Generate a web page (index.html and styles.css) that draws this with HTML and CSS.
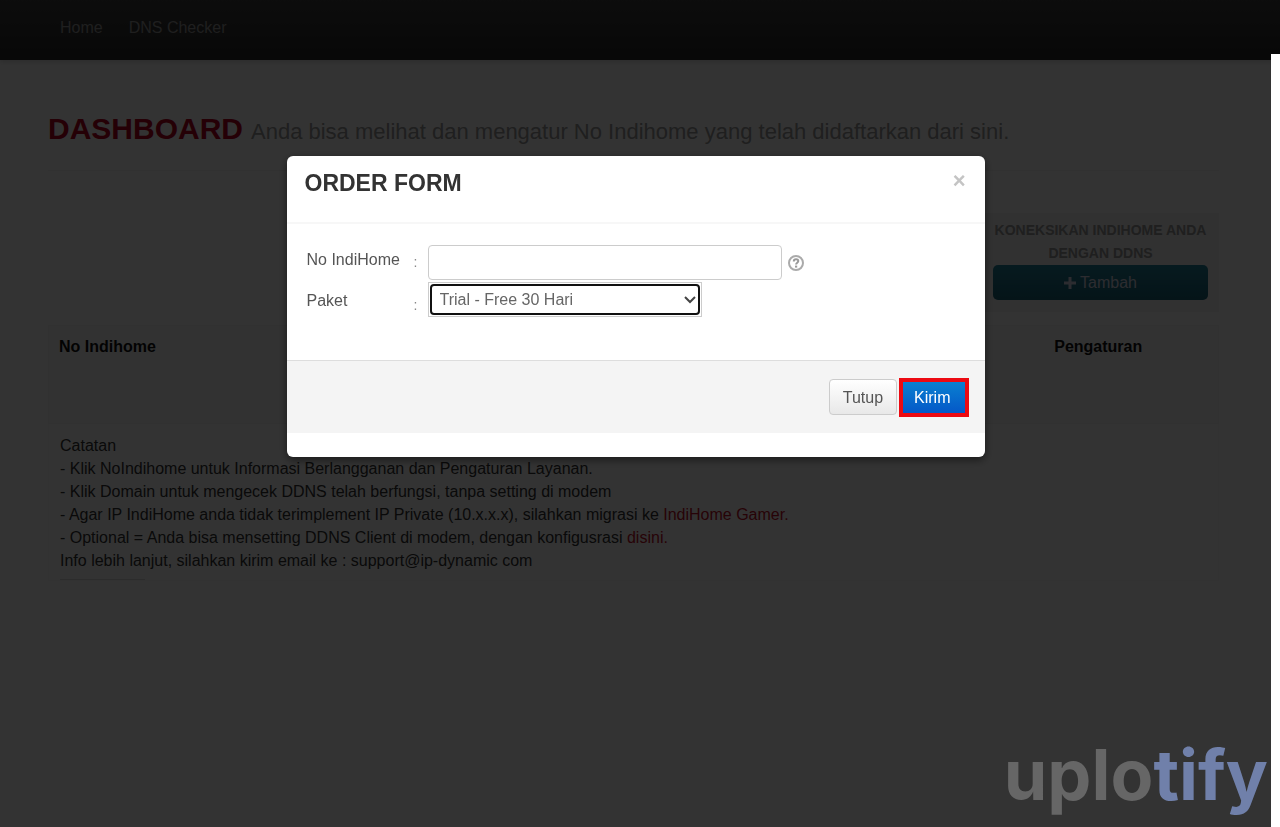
FILE: index.html
```
<!DOCTYPE html>
<html lang="id">
<head>
    <meta charset="UTF-8">
    <meta name="viewport" content="width=device-width, initial-scale=1.0">
    <title>Dashboard</title>
    <link rel="stylesheet" href="styles.css">
</head>
<body>
    <nav class="navbar">
        <a href="#">Home</a>
        <a href="#">DNS Checker</a>
    </nav>

    <main class="container">
        <header class="page-header">
            <h1>DASHBOARD</h1>
            <p>Anda bisa melihat dan mengatur No Indihome yang telah didaftarkan dari sini.</p>
        </header>

        <section class="well">
            <p>KONEKSIKAN INDIHOME ANDA DENGAN DDNS</p>
            <button type="button" class="btn-info">
                <svg width="12" height="12" viewBox="0 0 12 12" aria-hidden="true"><path d="M6 0v12M0 6h12" stroke="currentColor" stroke-width="3"/></svg>
                Tambah
            </button>
        </section>

        <table class="service-table">
            <thead>
                <tr>
                    <th>No Indihome</th>
                    <th class="settings">Pengaturan</th>
                </tr>
            </thead>
            <tbody>
                <tr>
                    <td></td>
                    <td></td>
                </tr>
            </tbody>
        </table>

        <section class="notes">
            <p>Catatan</p>
            <p>- Klik NoIndihome untuk Informasi Berlangganan dan Pengaturan Layanan.</p>
            <p>- Klik Domain untuk mengecek DDNS telah berfungsi, tanpa setting di modem</p>
            <p>- Agar IP IndiHome anda tidak terimplement IP Private (10.x.x.x), silahkan migrasi ke <a href="#">IndiHome Gamer.</a></p>
            <p>- Optional = Anda bisa mensetting DDNS Client di modem, dengan konfigusrasi <a href="#">disini.</a></p>
            <p>Info lebih lanjut, silahkan kirim email ke : support@ip-dynamic com</p>
            <hr>
        </section>
    </main>

    <div class="backdrop">
        <form class="modal" role="dialog" aria-labelledby="orderTitle">
            <div class="modal-header">
                <h2 id="orderTitle">ORDER FORM</h2>
                <button type="button" class="close" aria-label="Tutup">×</button>
            </div>
            <div class="modal-body">
                <label for="number">No IndiHome</label>
                <span class="colon">:</span>
                <div class="field">
                    <input type="text" id="number" name="number">
                    <svg width="16" height="16" viewBox="0 0 16 16" aria-hidden="true">
                        <circle cx="8" cy="8" r="7" fill="none" stroke="#aaa" stroke-width="2"/>
                        <path d="M5.8 6.4C5.8 3.5 10.3 3.5 10.3 6.1C10.3 7.8 8.1 7.6 8.1 9.5" fill="none" stroke="#999" stroke-width="2"/>
                        <path d="M7 10.6h2.2v2H7z" fill="#999"/>
                    </svg>
                </div>
                <label for="package">Paket</label>
                <span class="colon">:</span>
                <div class="select-wrap">
                    <select id="package" name="package">
                        <option>Trial - Free 30 Hari</option>
                    </select>
                    <svg class="chevron" width="12" height="8" viewBox="0 0 12 8" aria-hidden="true"><path d="M1 1l5 5 5-5" fill="none" stroke="#444" stroke-width="2"/></svg>
                </div>
            </div>
            <div class="modal-footer">
                <button type="button" class="btn">Tutup</button>
                <span class="highlight"><button type="submit" class="btn-primary">Kirim</button></span>
            </div>
        </form>
    </div>

    <div class="scroll-track"></div>
    <div class="watermark">uplo<span>tify</span></div>
</body>
</html>
```

FILE: styles.css
```
* {
    box-sizing: border-box;
    margin: 0;
    padding: 0;
}
body {
    font-family: "Liberation Sans", Arial, sans-serif;
    font-size: 16px;
    line-height: 23px;
    min-height: 100vh;
    padding-right: 9px;
    background: #fff;
    color: #333;
}
button, input, select {
    font: inherit;
}
a {
    text-decoration: none;
}
.navbar {
    display: flex;
    align-items: center;
    gap: 26px;
    height: 60px;
    margin-right: -9px;
    padding: 0 60px 6px;
    background: linear-gradient(#404040, #282828);
    box-shadow: 0 1px 6px rgba(0, 0, 0, 0.2);
}
.navbar a {
    color: #999;
}
.container {
    display: flex;
    flex-direction: column;
    padding: 51px 52px 0 48px;
}
.page-header {
    display: flex;
    align-items: baseline;
    gap: 8px;
    padding-bottom: 20px;
    border-bottom: 1px solid #f2f2f2;
}
.page-header h1 {
    font-size: 30px;
    line-height: 36px;
    color: #b8001e;
}
.page-header p {
    font-size: 22px;
    line-height: 36px;
    color: #999;
}
.well {
    align-self: flex-end;
    width: 236px;
    margin-top: 42px;
    padding: 6px 11px 12px 10px;
    background: #f3f3f3;
    text-align: center;
}
.well p {
    font-size: 14px;
    font-weight: bold;
    color: #999;
}
.btn-info {
    display: flex;
    align-items: center;
    justify-content: center;
    gap: 4px;
    width: 100%;
    height: 35px;
    border: 0;
    border-radius: 5px;
    background: linear-gradient(#22849c, #1a6478);
    color: #dde;
}
.service-table {
    width: 100%;
    margin-top: 13px;
    border: 1px solid #f2f2f2;
    border-collapse: collapse;
    background: #fafafa;
}
.service-table th {
    padding: 9px 10px;
    text-align: left;
    color: #111;
}
.service-table .settings {
    width: 240px;
    text-align: center;
}
.service-table td {
    height: 56px;
}
.notes {
    padding: 10px 11px 0;
    border: 1px solid #f7f7f7;
    border-top: 0;
}
.notes a {
    color: #c20f28;
}
.notes hr {
    width: 85px;
    margin-top: 7px;
    border: 0;
    border-top: 1px solid #ddd;
}
.backdrop {
    position: fixed;
    inset: 0 9px 0 0;
    background: rgba(0, 0, 0, 0.8);
    box-shadow: 9px 0 rgba(0, 0, 0, 0.8);
}
.modal {
    width: 698px;
    max-width: 90%;
    margin: 156px auto 0;
    padding-bottom: 24px;
    border-radius: 6px;
    background: #fff;
    box-shadow: 0 3px 8px rgba(0, 0, 0, 0.5);
}
.modal-header {
    display: flex;
    align-items: flex-start;
    justify-content: space-between;
    height: 68px;
    padding: 14px 19px 14px 18px;
    border-bottom: 2px solid #f7f7f7;
}
.modal-header h2 {
    font-size: 23px;
    line-height: 26px;
}
.close {
    border: 0;
    background: none;
    color: #c4c4c4;
    font-size: 22px;
    font-weight: bold;
    line-height: 22px;
    cursor: pointer;
}
.modal-body {
    display: grid;
    grid-template-columns: 107px 14px 1fr;
    row-gap: 2px;
    align-items: end;
    padding: 21px 20px 43px;
}
.modal-body label {
    padding-bottom: 8px;
    line-height: 16px;
    color: #555;
}
.modal-body label:first-child {
    padding-bottom: 12px;
}
.colon {
    padding-bottom: 4px;
    line-height: 16px;
    font-size: 14px;
    color: #888;
}
.colon:first-of-type {
    padding-bottom: 10px;
}
.field {
    display: flex;
    align-items: center;
    gap: 6px;
}
.field input {
    width: 354px;
    height: 35px;
    padding: 4px 10px;
    border: 1px solid #ccc;
    border-radius: 4px;
}
.select-wrap {
    position: relative;
    width: 274px;
    height: 35px;
    padding: 1px;
    border: 1px solid #ccc;
}
.select-wrap select {
    appearance: none;
    width: 100%;
    height: 100%;
    padding: 0 8px;
    border: 2px solid #111;
    border-radius: 4px;
    background: #fff;
    color: #666;
}
.chevron {
    position: absolute;
    top: 13px;
    right: 5px;
    pointer-events: none;
}
.modal-footer {
    display: flex;
    align-items: center;
    justify-content: flex-end;
    gap: 2px;
    height: 73px;
    padding: 0 16px;
    border-top: 1px solid #ddd;
    background: #f4f4f4;
}
.btn {
    height: 36px;
    padding: 0 13px;
    border: 1px solid #ccc;
    border-radius: 4px;
    background: linear-gradient(#fff, #e8e8e8);
    color: #555;
}
.highlight {
    display: flex;
    border: 4px solid #ec0a12;
}
.btn-primary {
    height: 31px;
    padding: 0 14px 0 11px;
    border: 0;
    background: linear-gradient(#0a80d0, #0458c8);
    color: #fff;
}
.scroll-track {
    position: fixed;
    top: 54px;
    right: 0;
    bottom: 0;
    width: 9px;
    background: #fff;
}
.watermark {
    position: fixed;
    right: 12px;
    bottom: 12px;
    font-family: Inter, sans-serif;
    font-size: 70px;
    font-weight: bold;
    line-height: 80px;
    color: #666;
}
.watermark span {
    color: #7080aa;
}
```
